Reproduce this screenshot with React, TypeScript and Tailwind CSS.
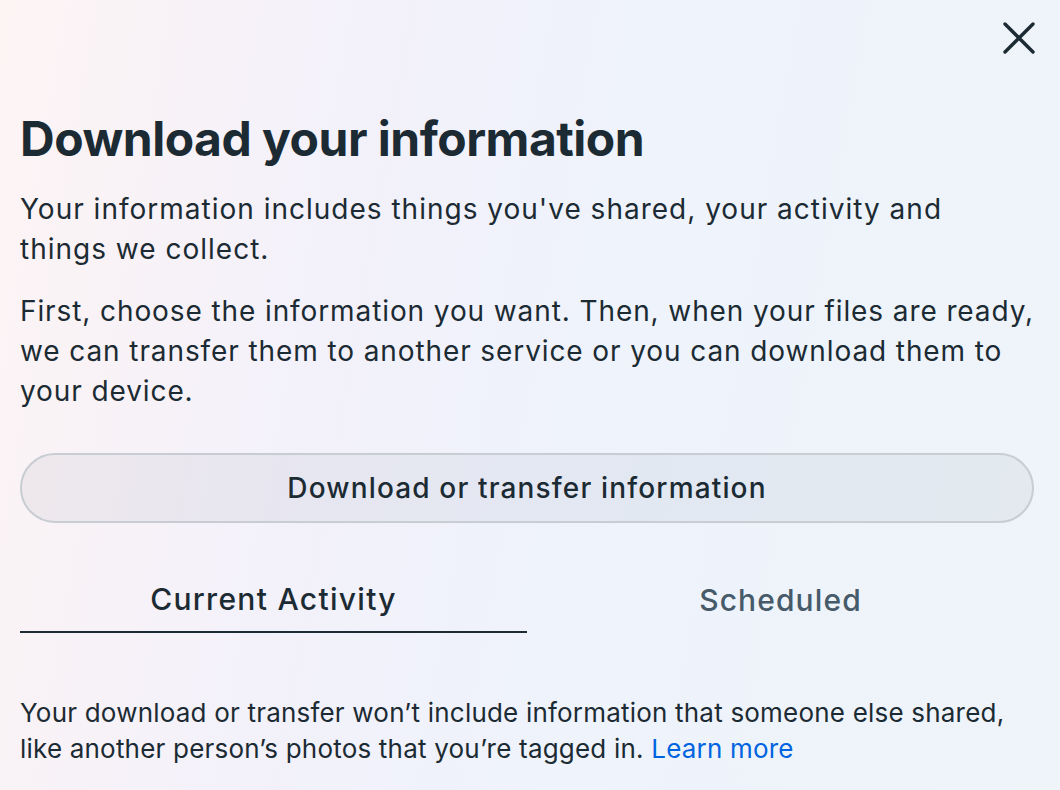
export default function App() {
  return (
    <div
      className="relative w-[1060px] h-[790px] overflow-hidden bg-[linear-gradient(100deg,#fdf4f4_0%,#f3f1fa_30%,#eef3fc_60%,#eef4f8_100%)] text-[#1c2b33]"
      style={{ fontFamily: "Inter, 'Noto Sans', sans-serif" }}
    >
      {/* close */}
      <button className="absolute left-[1001px] top-[20px] w-[35px] h-[35px] flex items-center justify-center">
        <svg width="34" height="34" viewBox="0 0 34 34" fill="none">
          <path d="M3 3L31 31M31 3L3 31" stroke="#1c2b33" strokeWidth="3.4" strokeLinecap="round" />
        </svg>
      </button>

      <div className="pl-[20px] pt-[111px] w-[1040px]">
        <h1 className="text-[48px] leading-[56px] font-bold tracking-[-0.5px]">Download your information</h1>

        <p className="mt-[22px] w-[1014px] text-[28px] leading-[40px] tracking-[1px]">
          Your information includes things you've shared, your activity and things we collect.
        </p>
        <p className="mt-[22px] w-[1030px] text-[28px] leading-[40px] tracking-[0.9px]">
          First, choose the information you want. Then, when your files are ready,
          <br />
          we can transfer them to another service or you can download them to
          <br />
          your device.
        </p>

        <button className="mt-[42px] w-[1014px] h-[70px] rounded-full border-2 border-[#c8ccd3] bg-[#1c2b33]/[0.05] text-[28px] font-medium tracking-[1.15px] flex items-center justify-center">
          Download or transfer information
        </button>

        <div className="mt-[44px] w-[1014px] grid grid-cols-2">
          <div className="h-[66px] flex items-center justify-center border-b-2 border-[#1c2b33] text-[30px] font-medium tracking-[1.3px]">
            Current Activity
          </div>
          <div className="h-[66px] flex items-center justify-center text-[30px] font-medium tracking-[1.1px] text-[#465a69]">
            Scheduled
          </div>
        </div>

        <p className="mt-[62px] text-[26px] leading-[36px] tracking-[0.2px]">
          Your download or transfer won’t include information that someone else shared, like another person’s photos
          that you’re tagged in. <a className="text-[#0064e0]">Learn more</a>
        </p>
      </div>
    </div>
  );
}
